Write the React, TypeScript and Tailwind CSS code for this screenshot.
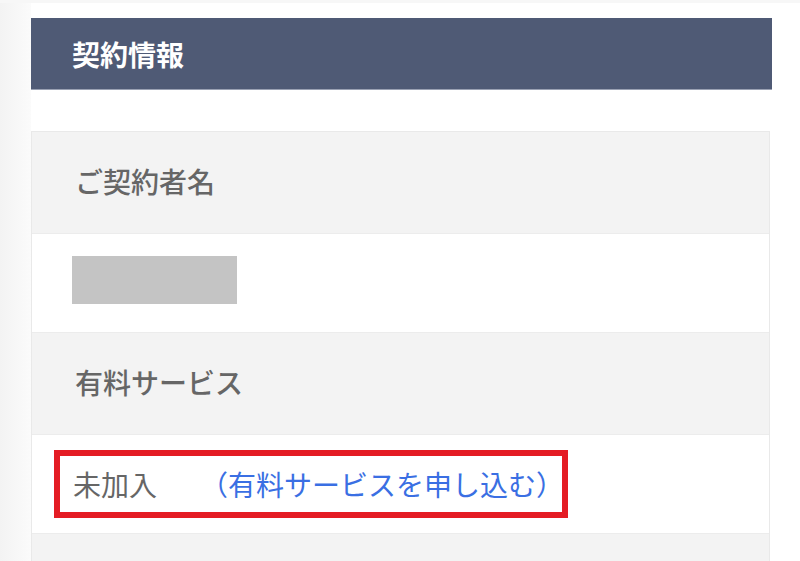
const jp = "font-['Noto_Sans_CJK_JP','Noto_Sans',sans-serif]";

function LabelRow({ label }: { label: string }) {
  return (
    <div className="flex h-[101px] items-center bg-[#f3f3f3] pb-[3px] pl-[43px]">
      <span className="text-[28px] font-medium leading-none text-[#666666]">{label}</span>
    </div>
  );
}

export default function App() {
  return (
    <div className={`${jp} relative h-[561px] w-[800px] overflow-hidden bg-white`}>
      <div className="h-[3px] bg-[#f7f7f7]" />
      <div className="flex h-[558px]">
        {/* left page edge */}
        <div className="w-[31px] shrink-0 bg-gradient-to-r from-[#f3f3f3] to-[#fbfbfb]" />

        <div className="w-[741px] pt-[15px]">
          {/* header */}
          <div className="flex h-[72px] items-center border-b border-[#9aa1b3] bg-[#4f5a75] pl-[41px]">
            <h2 className="text-[28px] font-bold leading-none text-white">契約情報</h2>
          </div>

          {/* contract table */}
          <div className="mr-[2px] mt-[41px] border border-[#e9e9e9]">
            <LabelRow label="ご契約者名" />
            <div className="flex h-[100px] items-center border-y border-[#ececec] bg-white pb-[6px] pl-[40px]">
              <div className="h-[48px] w-[165px] bg-[#c4c4c4]" />
            </div>
            <LabelRow label="有料サービス" />
            <div className="flex h-[100px] items-center border-y border-[#ececec] bg-white pl-[22px]">
              <div className="flex h-[68px] w-[514px] items-center overflow-hidden whitespace-nowrap border-[6px] border-[#e41c24] pl-[13px]">
                <span className="shrink-0 text-[28px] leading-none text-[#666666]">未加入</span>
                <a href="#" className="ml-[43px] shrink-0 text-[28px] leading-none text-[#3a6fe3]">
                  （有料サービスを申し込む）
                </a>
              </div>
            </div>
            <div className="h-[40px] bg-[#f3f3f3]" />
          </div>
        </div>
      </div>
    </div>
  );
}
